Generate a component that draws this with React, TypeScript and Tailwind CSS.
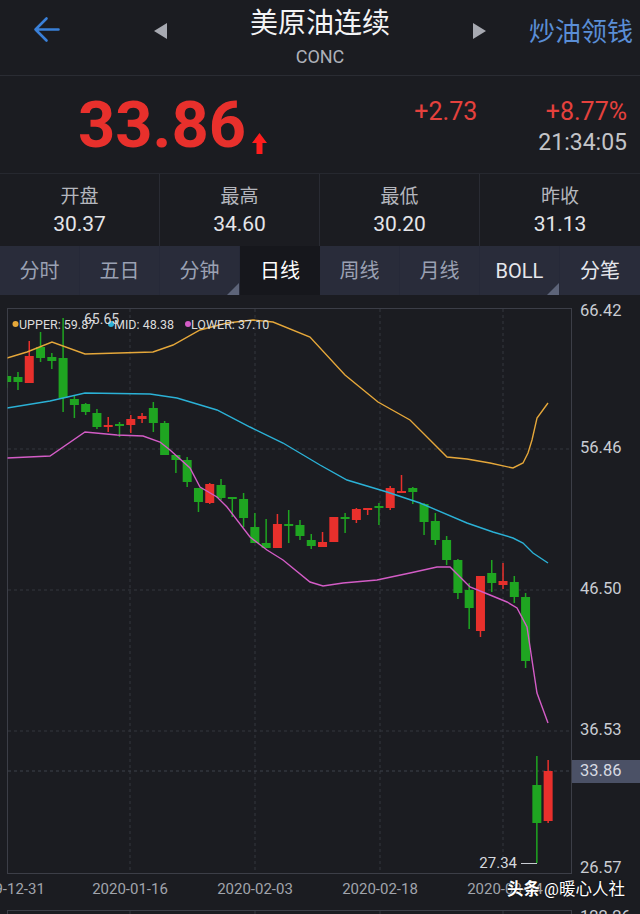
import React from "react"

type Candle = [number, number, number, number, number, "r" | "g"]

// wickTop, wickBottom, bodyTop, bodyBottom (page pixels), colour
const candles: Candle[] = [
  [0, 370, 388, 376, 382, "g"],
  [0, 372, 390, 377, 382, "g"],
  [0, 341, 383, 356, 383, "r"],
  [0, 332, 362, 347, 358, "g"],
  [0, 353, 369, 357, 361, "g"],
  [0, 318, 412, 358, 398, "g"],
  [0, 396, 418, 399, 405, "g"],
  [0, 403, 415, 404, 412, "g"],
  [0, 409, 429, 413, 427, "g"],
  [0, 417, 432, 425, 427, "r"],
  [0, 422, 437, 424, 426, "g"],
  [0, 415, 433, 419, 425, "r"],
  [0, 413, 423, 416, 419, "r"],
  [0, 402, 432, 408, 423, "g"],
  [0, 421, 455, 423, 455, "g"],
  [0, 455, 473, 455, 460, "g"],
  [0, 457, 487, 460, 482, "g"],
  [0, 488, 512, 488, 502, "g"],
  [0, 483, 504, 484, 503, "r"],
  [0, 479, 500, 485, 498, "g"],
  [0, 497, 517, 497, 499, "g"],
  [0, 493, 527, 499, 518, "g"],
  [0, 513, 543, 527, 543, "g"],
  [0, 519, 548, 543, 548, "g"],
  [0, 514, 548, 524, 548, "r"],
  [0, 510, 543, 524, 526, "g"],
  [0, 520, 540, 525, 536, "g"],
  [0, 534, 549, 540, 546, "g"],
  [0, 532, 547, 542, 547, "r"],
  [0, 517, 542, 517, 542, "r"],
  [0, 513, 533, 517, 519, "g"],
  [0, 508, 523, 509, 520, "r"],
  [0, 508, 515, 508, 510, "r"],
  [0, 503, 525, 506, 508, "g"],
  [0, 486, 510, 488, 508, "r"],
  [0, 475, 493, 491, 493, "r"],
  [0, 487, 504, 488, 492, "g"],
  [0, 503, 535, 504, 522, "g"],
  [0, 513, 545, 521, 540, "g"],
  [0, 536, 565, 540, 560, "g"],
  [0, 559, 599, 560, 593, "g"],
  [0, 583, 629, 590, 608, "g"],
  [0, 576, 637, 576, 631, "r"],
  [0, 560, 592, 573, 583, "g"],
  [0, 563, 589, 581, 585, "r"],
  [0, 576, 603, 582, 597, "g"],
  [0, 593, 668, 597, 661, "g"],
  [0, 756, 863, 785, 823, "g"],
  [0, 760, 823, 771, 821, "r"],
]

const upper = "7,358 27,352 52,342 85,354 153,352 173,345 200,330 227,323 253,320 273,322 310,337 345,375 378,402 410,420 430,440 447,457 467,459 490,463 513,468 523,463 528,453 532,440 537,418 548,403"
const mid = "7,408 50,401 85,393 150,394 177,398 217,410 250,427 283,443 320,465 347,480 387,492 420,503 467,523 493,532 513,538 523,543 533,553 548,563"
const lower = "7,458 50,456 85,432 117,435 143,436 160,442 170,450 190,468 200,487 217,497 227,507 250,537 267,550 283,560 310,582 323,586 343,583 377,580 410,573 437,567 450,567 470,587 490,595 507,602 517,608 527,627 537,693 548,723"

const stats = [
  { label: "开盘", value: "30.37" },
  { label: "最高", value: "34.60" },
  { label: "最低", value: "30.20" },
  { label: "昨收", value: "31.13" },
]

const tabs = [
  { name: "分时", tone: "text-[#9ba1b3]" },
  { name: "五日", tone: "text-[#9ba1b3]" },
  { name: "分钟", tone: "text-[#9ba1b3]", corner: true },
  { name: "日线", tone: "text-white", active: true },
  { name: "周线", tone: "text-[#9ba1b3]" },
  { name: "月线", tone: "text-[#9ba1b3]" },
  { name: "BOLL", tone: "text-[#e6e7ec]", corner: true },
  { name: "分笔", tone: "text-[#e6e7ec]" },
]

function KChart() {
  const xs = candles.map((_, i) => 6.7 + 11.28 * i)
  const dates = [
    { x: 7, t: "2019-12-31" },
    { x: 130, t: "2020-01-16" },
    { x: 255, t: "2020-02-03" },
    { x: 380, t: "2020-02-18" },
    { x: 505, t: "2020-03-04" },
  ]
  const axis = [
    { y: 312, t: "66.42" },
    { y: 449, t: "56.46" },
    { y: 590, t: "46.50" },
    { y: 731, t: "36.53" },
    { y: 869, t: "26.57" },
  ]
  return (
    <svg width="640" height="619" viewBox="0 295 640 619" className="block">
      <defs>
        <clipPath id="plot">
          <rect x="7.5" y="308" width="564" height="566" />
        </clipPath>
      </defs>

      {/* grid */}
      <g stroke="#35373f" strokeWidth="1" strokeDasharray="3 3">
        {[449, 590, 731].map((y) => (
          <line key={y} x1="8" x2="571" y1={y} y2={y} />
        ))}
        {[130, 255, 380, 503].map((x) => (
          <line key={x} x1={x} x2={x} y1="309" y2="873" />
        ))}
        <line x1="8" x2="571" y1="771" y2="771" stroke="#3f424c" />
        {[130, 255, 380, 503].map((x) => (
          <line key={"b" + x} x1={x} x2={x} y1="911" y2="914" />
        ))}
      </g>
      <rect x="7.5" y="308.5" width="564" height="565" fill="none" stroke="#3c3e47" />
      <line x1="7.5" x2="571.5" y1="910.5" y2="910.5" stroke="#3c3e47" />
      <line x1="7.5" x2="7.5" y1="910" y2="914" stroke="#3c3e47" />
      <line x1="571.5" x2="571.5" y1="910" y2="914" stroke="#3c3e47" />

      {/* candles */}
      <g clipPath="url(#plot)">
        {candles.map((c, i) => {
          const x = xs[i]
          const col = c[5] === "r" ? "#e8302c" : "#1fa521"
          const h = Math.max(c[4] - c[3], 1.5)
          return (
            <g key={i} fill={col} stroke="none">
              <rect x={x - 0.75} y={c[1]} width="1.5" height={c[2] - c[1]} />
              <rect x={x - 4.5} y={c[3]} width="9" height={h} />
            </g>
          )
        })}
        <polyline points={upper} fill="none" stroke="#e5a73a" strokeWidth="1.4" />
        <polyline points={mid} fill="none" stroke="#2bb1d6" strokeWidth="1.4" />
        <polyline points={lower} fill="none" stroke="#d35cc6" strokeWidth="1.4" />
      </g>

      {/* legend */}
      <g fontSize="12.5" fill="#dcdcdc">
        <circle cx="15.5" cy="324" r="3" fill="#e5a73a" />
        <text x="19" y="329">UPPER: 59.87</text>
        <circle cx="111" cy="324" r="3" fill="#2bb1d6" />
        <text x="114" y="329">MID: 48.38</text>
        <circle cx="188" cy="324" r="3" fill="#d35cc6" />
        <text x="191" y="329">LOWER: 37.10</text>
      </g>
      <text x="84" y="320" fontSize="14" fill="#d6d7db" dominantBaseline="middle">65.65</text>

      {/* low marker */}
      <line x1="521" x2="537" y1="863.5" y2="863.5" stroke="#c9ccd3" strokeWidth="1" />
      <text x="517" y="864" fontSize="15" fill="#d6d8de" textAnchor="end" dominantBaseline="middle">27.34</text>

      {/* right axis */}
      <g fontSize="16.5" fill="#c9ccd3">
        {axis.map((a) => (
          <text key={a.t} x="580" y={a.y} dominantBaseline="middle">{a.t}</text>
        ))}
        <rect x="572" y="760" width="68" height="23" fill="#4b5166" />
        <text x="580" y="771.5" dominantBaseline="middle" fill="#d7dae2">33.86</text>
        <text x="580" y="918" dominantBaseline="middle">122.26</text>
      </g>

      {/* dates */}
      <g fontSize="15" fill="#a1a4ac" textAnchor="middle">
        {dates.map((d) => (
          <text key={d.t} x={d.x} y="890" dominantBaseline="middle">{d.t}</text>
        ))}
      </g>
    </svg>
  )
}

export default function App() {
  return (
    <div className="relative h-[914px] w-[640px] overflow-hidden bg-[#1b1c21] font-['Roboto','Noto_Sans_CJK_SC',sans-serif] text-white">
      {/* Header */}
      <header className="flex h-[76px] border-b border-[#2a2c33]">
        <div className="w-[120px] pl-[33px] pt-[16px]">
          <svg width="27" height="27" viewBox="0 0 27 27" fill="none" stroke="#3a80d8" strokeWidth="2.6" strokeLinecap="round" strokeLinejoin="round">
            <path d="M25.5 13.5H2.5M13.5 2.5L2.5 13.5L13.5 24.5" />
          </svg>
        </div>
        <div className="flex w-[80px] justify-center pt-[23px]">
          <svg width="14" height="16" viewBox="0 0 14 16">
            <polygon points="14,0 14,16 1,8" fill="#a7a9b1" />
          </svg>
        </div>
        <div className="flex w-[240px] flex-col items-center">
          <div className="mt-[7px] text-[28px] leading-[34px] text-[#f4f4f6]">美原油连续</div>
          <div className="mt-[5px] text-[18px] leading-[22px] text-[#aeb1b9]">CONC</div>
        </div>
        <div className="flex w-[80px] justify-center pt-[23px]">
          <svg width="14" height="16" viewBox="0 0 14 16">
            <polygon points="0,0 0,16 13,8" fill="#a7a9b1" />
          </svg>
        </div>
        <div className="flex flex-1 justify-end pr-[7px] pt-[15px]">
          <span className="text-[26px] leading-[34px] text-[#5a8ed6]">炒油领钱</span>
        </div>
      </header>

      {/* Price */}
      <section className="flex h-[97px]">
        <div className="flex items-start pl-[78px]">
          <span className="mt-[17px] text-[65px] font-bold leading-[64px] text-[#e8302c]">33.86</span>
          <svg width="15" height="21" viewBox="0 0 15 21" className="ml-[6px] mt-[57px]">
            <polygon points="7.5,0 15,10 10.5,10 10.5,21 4.5,21 4.5,10 0,10" fill="#ff1d1d" />
          </svg>
        </div>
        <div className="ml-auto mr-[61px] mt-[21px] text-[25px] leading-[30px] text-[#e5413d]">+2.73</div>
        <div className="mt-[21px] flex flex-col items-end pr-[13px]">
          <span className="text-[25px] leading-[30px] text-[#e5413d]">+8.77%</span>
          <span className="mt-[2px] text-[23px] leading-[28px] text-[#c3c4c8]">21:34:05</span>
        </div>
      </section>

      {/* Stats */}
      <section className="grid h-[73px] grid-cols-4 border-t border-[#26282f]">
        {stats.map((s, i) => (
          <div key={s.label} className={`flex flex-col items-center pt-[11px] ${i < 3 ? "border-r border-[#292b33]" : ""}`}>
            <span className="text-[19px] leading-[24px] text-[#b4b6bd]">{s.label}</span>
            <span className="mt-[2px] text-[21px] leading-[26px] text-[#e4e5e9]">{s.value}</span>
          </div>
        ))}
      </section>

      {/* Tabs */}
      <nav className="grid h-[49px] grid-cols-8 bg-[#292c3a]">
        {tabs.map((t, i) => (
          <div
            key={t.name}
            className={`relative flex items-center justify-center text-[20px] ${t.tone} ${t.active ? "bg-[#16171c]" : ""} ${i < 7 && !t.active ? "border-r border-[#262938]" : ""}`}
          >
            {t.name}
            {t.corner && (
              <svg width="12" height="12" viewBox="0 0 12 12" className="absolute bottom-0 right-0">
                <polygon points="12,0 12,12 0,12" fill="#5d6479" />
              </svg>
            )}
          </div>
        ))}
      </nav>

      <KChart />

      {/* watermark */}
      <div className="absolute left-[507px] top-[879px] text-[16.5px] leading-[22px] text-white [text-shadow:0_0_2px_rgba(0,0,0,0.9)]">
        <span className="font-bold">头条</span> @暖心人社
      </div>
    </div>
  )
}
